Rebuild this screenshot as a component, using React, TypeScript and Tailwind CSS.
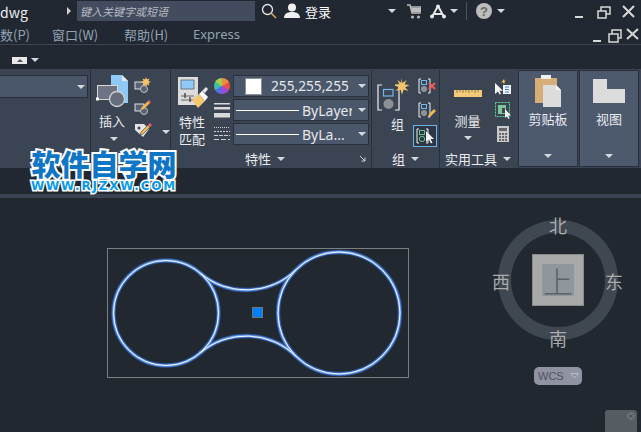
const cjk = "font-['Noto_Sans_CJK_SC','Noto_Sans',sans-serif]";

const filletPath = 'M200 273A71.500 71.500 0 0 0 296.300 269.500M200 353A71.500 71.500 0 0 1 296.300 356.500';

function Caret({ className = '' }: { className?: string }) {
  return <span className={`block w-0 h-0 border-x-[4px] border-x-transparent border-t-[4px] border-t-[#d5d8dc] ${className}`} />;
}

function WinButtons({ small = false }: { small?: boolean }) {
  return (
    <svg width={small ? 46 : 66} height="16" viewBox={small ? '0 0 46 16' : '0 0 66 16'} fill="none" stroke="#d8d8d8" strokeWidth="2">
      {small ? (
        <>
          <path d="M0 14h8" />
          <path d="M16 7h9v8h-9zM19 7V3h9v8h-3" strokeWidth="1.500" />
          <path d="M34 2l11 10M45 2L34 12" />
        </>
      ) : (
        <>
          <path d="M0 13h8" />
          <path d="M23 7h8v7h-8zM26 7V3h9v7h-4" strokeWidth="1.500" />
          <path d="M48 2l11 11M59 2L48 13" />
        </>
      )}
    </svg>
  );
}

function InsertIcon() {
  return (
    <svg width="36" height="33" viewBox="0 0 36 33">
      <path d="M15 0h11l6 6v22H15z" fill="#8fc9f7" />
      <path d="M26 0v6h6z" fill="#e8e8e8" />
      <rect x="1.500" y="10.500" width="20" height="14" fill="#6d7484" stroke="#d8d8d8" />
      <circle cx="21" cy="24" r="7.500" fill="#656d7c" stroke="#cfd0d2" strokeWidth="1.300" />
      <rect x="0" y="22.500" width="3" height="3" fill="#fff" />
    </svg>
  );
}

function BlockSmall({ badge }: { badge: 'star' | 'pencil' }) {
  return (
    <svg width="18" height="17" viewBox="0 0 18 17">
      <rect x="1" y="5" width="9" height="7" fill="#596172" stroke="#e0e0e0" />
      <circle cx="10" cy="12" r="3.500" fill="#596172" stroke="#bfc0c2" />
      {badge === 'star' ? (
        <path d="M12 0l1 2.500 2.500-1-1 2.500 2.500 1-2.500 1 1 2.500-2.500-1-1 2.500-1-2.500-2.500 1 1-2.500-2.500-1 2.500-1-1-2.500 2.500 1z" fill="#f8c467" />
      ) : (
        <path d="M8 8l6-6 2 2-6 6-3 1z" fill="#f2b84e" />
      )}
      {badge === 'pencil' && <path d="M13.500 2.500l1.500-1.500 2 2-1.500 1.500z" fill="#e8636b" />}
    </svg>
  );
}

function TagPencil() {
  return (
    <svg width="20" height="18" viewBox="0 0 20 18">
      <path d="M1 3h9l5 5-6 8-8-7z" fill="#e4e4e4" />
      <circle cx="5" cy="7" r="1.500" fill="#3b4453" />
      <path d="M7 11l7-7 2 2-7 7-3 1z" fill="#f2b84e" stroke="#3b4453" strokeWidth=".6" />
      <path d="M14 4l2-2 2 2-2 2z" fill="#e8636b" />
    </svg>
  );
}

function MatchIcon() {
  return (
    <svg width="31" height="33" viewBox="0 0 31 33">
      <rect x="0" y="0" width="20" height="28" fill="#dcdcdc" />
      <rect x="3" y="3" width="13" height="9" fill="#8fc9f7" stroke="#555" strokeWidth=".7" />
      <path d="M3 19h13M3 23h13" stroke="#666" strokeWidth="1" />
      <path d="M7 16v5M12 20v5" stroke="#555" strokeWidth="1.600" />
      <path d="M14 23l7-6 6 7-7 7z" fill="#f3c66f" />
      <path d="M21 17l3-3 6 6-3 4z" fill="#fff" />
      <path d="M24 14l4-4 2 2-3 4z" fill="#e6e6e6" />
    </svg>
  );
}

function GroupBig() {
  return (
    <svg width="34" height="33" viewBox="0 0 34 33">
      <path d="M5 7H1v25h4M18 7h4v25h-4" fill="none" stroke="#f0f0f0" strokeWidth="1.200" />
      <rect x="6.500" y="11.500" width="9.500" height="6.500" fill="none" stroke="#6fb7ee" strokeWidth="1.200" />
      <circle cx="11.500" cy="26" r="5" fill="#8d9096" />
      <path d="M24 0l1.600 5 4-3-2 4.500 5 .5-4.500 2.500 3.500 3.500-5-1.500-1.600 5-1.600-5-5 1.500 3.500-3.500-4.500-2.500 5-.5-2-4.500 4 3z" fill="#f8c467" />
    </svg>
  );
}

function GroupSmall({ kind }: { kind: 'x' | 'pencil' | 'select' }) {
  const blue = kind === 'select' ? '#62c48a' : '#6fb7ee';
  const round = kind === 'select' ? '#62c48a' : '#8d9096';
  return (
    <svg width="18" height="17" viewBox="0 0 18 17">
      <path d="M3 1H1v14h2M10 1h2v14h-2" fill="none" stroke="#f0f0f0" />
      <rect x="3.500" y="2.500" width="5" height="4" fill="none" stroke={blue} />
      <circle cx="6" cy="11" r="2.700" fill={kind === 'select' ? 'none' : round} stroke={round} />
      {kind === 'x' && <path d="M11 5l6 6M17 5l-6 6" stroke="#ef5a5a" strokeWidth="2" />}
      {kind === 'pencil' && <path d="M10 15l1-3 5-5 2 2-5 5z" fill="#f2b84e" />}
      {kind === 'select' && <path d="M10 3v11l3-2.500 2 4 1.500-1-2-3.500h3.500z" fill="#f4f4f4" />}
    </svg>
  );
}

function Ruler() {
  return (
    <svg width="28" height="7" viewBox="0 0 28 7" className="block">
      <rect width="28" height="7" y="0" fill="#f5c97a" />
      <path d="M3 0v3M6 0v2M9 0v3M12 0v2M15 0v3M18 0v2M21 0v3M24 0v2" stroke="#6d5a34" strokeWidth=".7" />
    </svg>
  );
}

function PickIcon() {
  return (
    <svg width="18" height="17" viewBox="0 0 18 17">
      <path d="M1 5v11l3-2.500 1.500 3 1.500-.7-1.500-3H9z" fill="#f4f4f4" />
      <path d="M7 5l3-4 .5 2.500L12 1l-2 5-1-2z" fill="#f8d04a" />
      <rect x="9" y="7" width="8" height="9" fill="#f4f4f4" />
      <path d="M11 9h4M11 11.500h4M11 14h4" stroke="#2f7fe0" />
    </svg>
  );
}

function AreaIcon() {
  return (
    <svg width="17" height="17" viewBox="0 0 17 17">
      <rect x=".5" y=".5" width="14" height="14" fill="none" stroke="#5fd08a" strokeDasharray="2 1" />
      <path d="M3 3h8v9H3z" fill="#7fc49a" />
      <path d="M7 6h3v5H7z" fill="#3b4453" />
      <path d="M10 7v9l2-2 1.200 3 1.300-.6-1.200-2.900h2.700z" fill="#f4f4f4" />
    </svg>
  );
}

function Calculator() {
  return (
    <svg width="12" height="16" viewBox="0 0 12 16">
      <rect width="12" height="16" fill="#c9c9c9" />
      <rect x="2" y="2" width="8" height="3" fill="#666" />
      <path d="M2 7h2v2H2zM5 7h2v2H5zM8 7h2v2H8zM2 10h2v2H2zM5 10h2v2H5zM8 10h2v2H8zM2 13h2v2H2zM5 13h2v2H5zM8 13h2v2H8z" fill="#666" />
    </svg>
  );
}

function PropRow({ children }: { children: React.ReactNode }) {
  return (
    <div className="h-[22px] w-[136px] bg-[#4a566a] border border-[#2a303b] flex items-center relative overflow-hidden text-[14px] text-[#e6e8ea] font-['Noto_Sans',sans-serif]">
      {children}
      <Caret className="absolute right-[2px] top-[8px]" />
    </div>
  );
}

function LineRow({ label }: { label: string }) {
  return (
    <PropRow>
      <span className="block w-[63px] h-px bg-white ml-[2px] shrink-0" />
      <span className="ml-[3px] w-[50px] overflow-hidden whitespace-nowrap">{label}</span>
    </PropRow>
  );
}

export default function App() {
  return (
    <div className={`relative w-[641px] h-[432px] overflow-hidden bg-[#212832] flex flex-col ${cjk}`}>
      {/* title bar */}
      <div className="h-[22px] flex items-center shrink-0 text-[#eceff1]">
        <span className="text-[14px] w-[66px] mt-[3px]">dwg</span>
        <span className="block ml-[1px] w-0 h-0 border-y-[4px] border-y-transparent border-l-[4px] border-l-[#d0d0d0]" />
        <div className="ml-[6px] w-[178px] h-[20px] bg-[#434c5e] flex items-center pl-[3px] text-[11px] italic text-[#b7bbc4]">键入关键字或短语</div>
        <svg width="16" height="16" viewBox="0 0 16 16" className="ml-[6px]" fill="none">
          <circle cx="6.500" cy="6.500" r="5" stroke="#e8e8e8" strokeWidth="1.300" />
          <path d="M10 10l5 5" stroke="#d3a45c" strokeWidth="1.600" />
        </svg>
        <svg width="16" height="16" viewBox="0 0 16 16" className="ml-[7px]" fill="#f0f0f0">
          <circle cx="8" cy="4.500" r="4" />
          <path d="M0 15c0-4 3-6 8-6s8 2 8 6z" />
        </svg>
        <span className="ml-[5px] text-[13px] text-white leading-none">登录</span>
        <Caret className="ml-[57px] border-t-[#cfd2d6]" />
        <svg width="14" height="15" viewBox="0 0 14 15" className="ml-[11px]" fill="none">
          <path d="M0 1h3l2 8h8l1-6H4" stroke="#bdbdbd" strokeWidth="1.400" />
          <path d="M4 4h9v4H5z" fill="#bdbdbd" />
          <circle cx="5.500" cy="13" r="1.500" fill="#bdbdbd" />
          <circle cx="11.500" cy="13" r="1.500" fill="#bdbdbd" />
        </svg>
        <svg width="16" height="15" viewBox="0 0 16 15" className="ml-[9px]" fill="none">
          <path d="M8 2L2 13M8 2l6 11M4 10h8" stroke="#e6e6e6" strokeWidth="2" />
          <circle cx="8" cy="2.500" r="2" fill="#e6e6e6" />
          <circle cx="2" cy="12.500" r="2" fill="#e6e6e6" />
          <circle cx="14" cy="12.500" r="2" fill="#e6e6e6" />
        </svg>
        <Caret className="ml-[4px] border-t-[#cfd2d6]" />
        <span className="ml-[8px] block w-px h-[18px] bg-[#4b5563]" />
        <span className="ml-[9px] w-[16px] h-[16px] rounded-full bg-[#bdbdbd] text-[#6b6b6b] text-[13px] font-bold flex items-center justify-center leading-none font-['Liberation_Sans',sans-serif]">?</span>
        <Caret className="ml-[5px] border-t-[#cfd2d6]" />
        <span className="ml-[70px] mt-[2px]"><WinButtons /></span>
      </div>

      {/* menu bar */}
      <div className="h-[23px] border-b border-[#3d4450] flex items-center shrink-0 text-[13px] text-[#93a3b3] pt-[3px]">
        <span className="w-[52px]">数(P)</span>
        <span className="w-[72px]">窗口(W)</span>
        <span className="w-[69px]">帮助(H)</span>
        <span className="font-['Noto_Sans',sans-serif]">Express</span>
        <span className="ml-auto mr-[2px]"><WinButtons small /></span>
      </div>

      {/* tab row */}
      <div className="h-[25px] border-b border-[#3d4450] flex items-center shrink-0 pl-[12px] pt-[6px]">
        <span className="w-[15px] h-[7px] bg-[#e8e8e8] flex items-center justify-center">
          <span className="block w-0 h-0 border-x-[3px] border-x-transparent border-b-[3px] border-b-[#555]" />
        </span>
        <Caret className="ml-[4px] border-x-[3px] border-t-[3px]" />
      </div>

      {/* ribbon */}
      <div className="h-[98px] bg-[#3b4453] flex shrink-0 text-[13px] text-[#e9ebee]">
        <div className="w-[91px] border-r border-[#2a303b] pt-[5px]">
          <div className="w-[88px] h-[23px] bg-[#4a566a] border border-[#2a303b] border-l-0 flex items-center justify-end pr-[2px]">
            <Caret />
          </div>
        </div>

        <div className="w-[80px] border-r border-[#2a303b] flex pt-[5px]">
          <div className="w-[44px] pl-[5px] flex flex-col">
            <InsertIcon />
            <span className="mt-[3px] ml-[3px] leading-[20px]">插入</span>
            <Caret className="ml-[14px] mt-[6px] border-x-[3px] border-t-[3px]" />
          </div>
          <div className="flex flex-col pt-[2px] gap-[5px] relative">
            <BlockSmall badge="star" />
            <BlockSmall badge="pencil" />
            <div className="flex items-center">
              <TagPencil />
              <Caret className="ml-[8px] mt-[4px] border-x-[3px] border-t-[3px]" />
            </div>
          </div>
        </div>

        <div className="w-[201px] border-r border-[#2a303b] flex flex-col">
          <div className="flex h-[80px] pt-[4px]">
            <div className="w-[42px] pl-[7px] pt-[3px] flex flex-col">
              <MatchIcon />
              <span className="mt-[3px] ml-[1px] leading-[18px]">特性</span>
              <span className="ml-[1px] leading-[16px]">匹配</span>
            </div>
            <div className="w-[20px] flex flex-col items-start pl-[1px] pt-[4px]">
              <span className="w-[16px] h-[16px] rounded-full bg-[conic-gradient(#f08a3c_0_60deg,#e8504a_60deg_120deg,#a04ad0_120deg_180deg,#5a6ae8_180deg_240deg,#3cc0a0_240deg_300deg,#a0d050_300deg_360deg)]" />
              <svg width="16" height="16" viewBox="0 0 16 16" className="mt-[9px]">
                <path d="M0 0h16v1.500H0zM0 4h16v2.500H0zM0 10h16v4.500H0z" fill="#d8d8d8" />
              </svg>
              <svg width="16" height="14" viewBox="0 0 16 14" className="mt-[8px]" stroke="#d0d0d0" strokeWidth="1">
                <path d="M0 .5h16" strokeDasharray="1 1" />
                <path d="M0 4.500h16" strokeDasharray="2 1" />
                <path d="M0 8.500h16" strokeDasharray="4 1" />
                <path d="M0 12.500h16" strokeDasharray="5 2" />
              </svg>
            </div>
            <div className="flex flex-col gap-[2px] mt-[1px]">
              <PropRow>
                <span className="block w-[17px] h-[17px] bg-white border border-[#8a8f98] ml-[11px] shrink-0" />
                <span className="ml-[9px] text-[13.700px] whitespace-nowrap">255,255,255</span>
              </PropRow>
              <LineRow label="ByLayer" />
              <LineRow label="ByLa..." />
            </div>
          </div>
          <div className="flex-1 flex items-center relative pl-[74px] pb-[1px]">
            <span className="leading-none">特性</span>
            <Caret className="ml-[6px]" />
            <svg width="7" height="7" viewBox="0 0 7 7" className="absolute right-[5px] top-[5px]" fill="none" stroke="#d0d0d0">
              <path d="M1 1l5 5M2.500 6H6V2.500" />
            </svg>
          </div>
        </div>

        <div className="w-[68px] border-r border-[#2a303b] flex flex-col">
          <div className="flex h-[80px]">
            <div className="w-[41px] pl-[5px] pt-[8px] flex flex-col">
              <GroupBig />
              <span className="mt-[5px] ml-[14px] leading-[16px]">组</span>
            </div>
            <div className="flex flex-col items-start">
              <span className="mt-[8px] ml-[5px]"><GroupSmall kind="x" /></span>
              <span className="mt-[7px] ml-[5px]"><GroupSmall kind="pencil" /></span>
              <span className="mt-[6px] w-[24px] h-[22px] border border-[#6cb4ee] bg-[#2f3745] flex items-center justify-center"><GroupSmall kind="select" /></span>
            </div>
          </div>
          <div className="flex-1 flex items-center pl-[20px] pb-[1px]">
            <span className="leading-none">组</span>
            <Caret className="ml-[6px]" />
          </div>
        </div>

        <div className="w-[78px] flex flex-col">
          <div className="flex h-[80px]">
            <div className="w-[54px] flex flex-col items-center pl-[1px] pt-[20px]">
              <Ruler />
              <span className="mt-[15px] leading-[18px]">测量</span>
              <Caret className="mt-[6px] border-x-[3px] border-t-[3px]" />
            </div>
            <div className="flex flex-col items-center pt-[8px] w-[18px]">
              <PickIcon />
              <span className="mt-[7px]"><AreaIcon /></span>
              <span className="mt-[7px]"><Calculator /></span>
            </div>
          </div>
          <div className="flex-1 flex items-center pl-[5px] pb-[1px]">
            <span className="leading-none whitespace-nowrap">实用工具</span>
            <Caret className="ml-[6px]" />
          </div>
        </div>

        <div className="w-[60px] h-[97px] bg-[#4d5a6e] border border-[#2a303b] flex flex-col items-center pt-[4px]">
          <svg width="27" height="32" viewBox="0 0 27 32">
            <rect x="0" y="3" width="22" height="25" fill="#d7ae78" />
            <rect x="6" y="0" width="10" height="4" fill="#f0f0f0" />
            <path d="M8 10h13l5 5v17H8z" fill="#dcdcdc" />
            <path d="M21 10v5h5z" fill="#f4f4f4" />
          </svg>
          <span className="mt-[3px] leading-[18px]">剪贴板</span>
          <Caret className="mt-[26px]" />
        </div>
        <div className="ml-[1px] w-[60px] h-[97px] bg-[#4d5a6e] border border-[#2a303b] flex flex-col items-center pt-[8px]">
          <svg width="32" height="24" viewBox="0 0 32 24">
            <path d="M0 0h14v10h18v14H0z" fill="#dcdcdc" />
          </svg>
          <span className="mt-[7px] leading-[18px]">视图</span>
          <Caret className="mt-[26px]" />
        </div>
      </div>

      <div className="h-[26px] shrink-0" />
      <div className="h-[4px] bg-[#3b4453] shrink-0" />

      {/* model space */}
      <div className="flex-1 relative bg-[#212830]">
        <svg width="641" height="234" viewBox="0 198 641 234" className="block" fill="none">
          <rect x="107.500" y="248.500" width="301" height="129" stroke="#7b7f83" />
          <g stroke="#2c5fb5" strokeWidth="4.500" opacity=".85">
            <circle cx="166" cy="313" r="52.500" />
            <circle cx="339" cy="313" r="61" />
            <path d={filletPath} />
          </g>
          <g stroke="#6f9ee8" strokeWidth="2.400">
            <circle cx="166" cy="313" r="52.500" />
            <circle cx="339" cy="313" r="61" />
            <path d={filletPath} />
          </g>
          <g stroke="#f2f6ff" strokeWidth="1">
            <circle cx="166" cy="313" r="52.500" />
            <circle cx="339" cy="313" r="61" />
            <path d={filletPath} />
          </g>
          <rect x="252.500" y="307.500" width="10" height="10" fill="#0080ff" stroke="#6f7479" />
          <circle cx="558" cy="280" r="53.500" stroke="#3f4750" strokeWidth="13" />
        </svg>

        {/* view cube */}
        <div className="absolute left-[532px] top-[56px] w-[52px] h-[52px] bg-[#a9a9a9] border border-[#8a8a8a] flex items-center justify-center">
          <span className="w-[32px] h-[32px] bg-[#8f979c] flex items-center justify-center text-[30px] leading-none text-[#5d6266] font-light">上</span>
        </div>
        <span className="absolute left-[549px] top-[16px] text-[18px] leading-[22px] text-[#a9abad]">北</span>
        <span className="absolute left-[549px] top-[129px] text-[18px] leading-[22px] text-[#a9abad]">南</span>
        <span className="absolute left-[492px] top-[72px] text-[18px] leading-[22px] text-[#a9abad]">西</span>
        <span className="absolute left-[605px] top-[72px] text-[18px] leading-[22px] text-[#a9abad]">东</span>
        <div className="absolute left-[534px] top-[169px] w-[48px] h-[18px] rounded-[5px] bg-[#8f93a3] flex items-center pl-[4px] gap-[6px] text-[11px] text-[#4f535c] font-['Liberation_Sans',sans-serif]">
          WCS
          <svg width="9" height="6" viewBox="0 0 9 6" fill="none" stroke="#b9bcc6"><path d="M.5.5h8L4.500 5z" /></svg>
        </div>
        <div className="absolute left-[605px] top-[212px] w-[32px] h-[30px] rounded-[3px] bg-[#555c62] flex justify-end p-[2px]">
          <svg width="8" height="8" viewBox="0 0 8 8">
            <circle cx="4" cy="4" r="4" fill="#6b7177" />
            <path d="M2 2l4 4M6 2L2 6" stroke="#4a5055" />
          </svg>
        </div>
      </div>

      {/* watermark */}
      <div className="absolute left-[30px] top-[147px] w-[148px] flex flex-col items-center">
        <span className="text-[29px] leading-[33px] font-black whitespace-nowrap text-[#0f76c6] [-webkit-text-stroke:4px_#ffffff] [paint-order:stroke_fill]">软件自学网</span>
        <span className="text-[12px] leading-[13px] font-bold whitespace-nowrap text-[#0a9cea] font-['DejaVu_Sans',sans-serif] [-webkit-text-stroke:3px_#ffffff] [paint-order:stroke_fill] tracking-[1.800px]">WWW.RJZXW.COM</span>
      </div>
    </div>
  );
}
